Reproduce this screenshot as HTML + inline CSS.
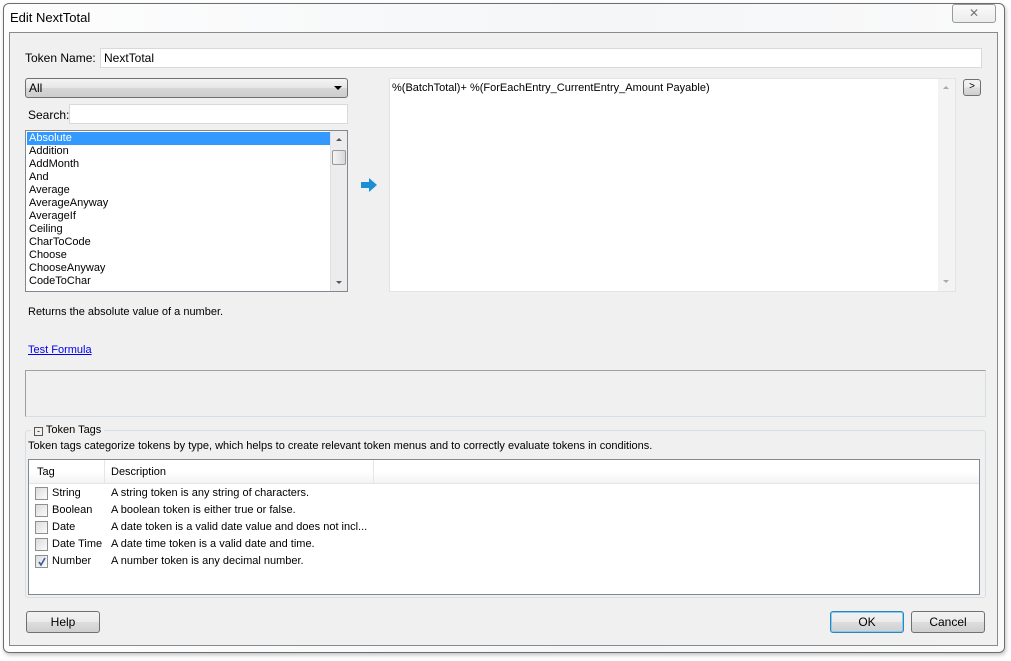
<!DOCTYPE html>
<html><head><style>
*{box-sizing:border-box}
body{margin:0;width:1011px;height:661px;background:#fff;font:12px "Liberation Sans",sans-serif;color:#000;position:relative;overflow:hidden}
.a{position:absolute}
.win{left:3px;top:3px;width:1002px;height:650px;border:1px solid #6d6d6d;border-radius:6px;background:linear-gradient(90deg,#fdfdfd,#f4f6f8 60%,#fafafa);box-shadow:1px 2px 4px rgba(0,0,0,.25)}
.inner{left:9px;top:32px;width:989px;height:614px;background:#f0f0f0;border:1px solid #8a8a8a}
.inp{background:#fff;border:1px solid #d6d9de}
.btn{border:1px solid #707070;border-radius:3px;background:linear-gradient(#f2f2f2,#ebebeb 50%,#dddddd 51%,#cfcfcf);text-align:center;line-height:18px}
.li{position:absolute;left:3px;height:13px;line-height:13px;white-space:nowrap;font-size:11px}
.cb{position:absolute;left:6px;width:13px;height:13px;border:1px solid #8e8f8f;background:linear-gradient(135deg,#dcdcdc,#fbfbfb)}
.row{position:absolute;height:17px;line-height:17px;white-space:nowrap}
</style></head><body>
<div class="a win"></div>
<div class="a" style="left:10px;top:10px;font-size:13px">Edit NextTotal</div>
<div class="a" style="left:952px;top:4px;width:44px;height:19px;border:1px solid #9a9a9a;border-radius:3px;background:linear-gradient(#fafafa,#ececec);text-align:center;line-height:17px;color:#777;font-size:12px">✕</div>
<div class="a inner"></div>

<div class="a" style="left:25px;top:51px">Token Name:</div>
<div class="a inp" style="left:100px;top:48px;width:882px;height:20px;padding:2px 3px">NextTotal</div>

<div class="a" style="left:25px;top:78px;width:323px;height:20px;border:1px solid #707070;border-radius:3px;background:linear-gradient(#f4f4f4,#e6e6e6 50%,#d7d7d7 51%,#cdcdcd);padding:2px 3px">All<span class="a" style="right:5px;top:7px;width:0;height:0;border-left:4px solid transparent;border-right:4px solid transparent;border-top:4px solid #000"></span></div>
<div class="a" style="left:28px;top:108px">Search:</div>
<div class="a inp" style="left:69px;top:104px;width:279px;height:20px"></div>

<div class="a" style="left:25px;top:130px;width:323px;height:162px;background:#fff;border:1px solid #828790">
 <div class="a" style="left:1px;top:1px;width:303px;height:13px;background:#3399ff"></div>
 <div class="li" style="top:1px;color:#fff">Absolute</div>
 <div class="li" style="top:14px">Addition</div>
 <div class="li" style="top:27px">AddMonth</div>
 <div class="li" style="top:40px">And</div>
 <div class="li" style="top:53px">Average</div>
 <div class="li" style="top:66px">AverageAnyway</div>
 <div class="li" style="top:79px">AverageIf</div>
 <div class="li" style="top:92px">Ceiling</div>
 <div class="li" style="top:105px">CharToCode</div>
 <div class="li" style="top:118px">Choose</div>
 <div class="li" style="top:131px">ChooseAnyway</div>
 <div class="li" style="top:144px">CodeToChar</div>
 <div class="a" style="left:304px;top:0;width:17px;height:160px;background:#ececec;border-left:1px solid #e0e0e0">
  <div class="a" style="left:5px;top:7px;border-left:3px solid transparent;border-right:3px solid transparent;border-bottom:3px solid #555"></div>
  <div class="a" style="left:1px;top:19px;width:14px;height:15px;border:1px solid #999;border-radius:2px;background:linear-gradient(90deg,#f4f4f4,#d8d8d8)"></div>
  <div class="a" style="left:5px;top:150px;border-left:3px solid transparent;border-right:3px solid transparent;border-top:3px solid #555"></div>
 </div>
</div>

<svg class="a" style="left:361px;top:178px" width="16" height="14" viewBox="0 0 16 14"><path d="M0 4h8V0l8 7-8 7v-4H0z" fill="#1d8ed6"/></svg>

<div class="a" style="left:389px;top:78px;width:567px;height:214px;background:#fff;border:1px solid #e3e3e3">
 <div class="a" style="left:2px;top:3px;white-space:nowrap;font-size:11px">%(BatchTotal)+ %(ForEachEntry_CurrentEntry_Amount Payable)</div>
 <div class="a" style="left:548px;top:0;width:17px;height:212px;background:#f3f3f3">
  <div class="a" style="left:5px;top:7px;border-left:3px solid transparent;border-right:3px solid transparent;border-bottom:3px solid #aaa"></div>
  <div class="a" style="left:5px;top:201px;border-left:3px solid transparent;border-right:3px solid transparent;border-top:3px solid #aaa"></div>
 </div>
</div>
<div class="a btn" style="left:963px;top:79px;width:18px;height:17px;line-height:14px;font-size:10px">&gt;</div>

<div class="a" style="left:28px;top:306px;font-size:11px">Returns the absolute value of a number.</div>
<div class="a" style="left:28px;top:344px;font-size:11px;color:#0000ee;text-decoration:underline">Test Formula</div>

<div class="a" style="left:25px;top:370px;width:961px;height:47px;border:1px solid #d5dfe5;border-top-color:#a0a0a0;border-left-color:#a0a0a0"></div>

<div class="a" style="left:25px;top:430px;width:961px;height:168px;border:1px solid #d5dfe5;border-radius:3px"></div>
<div class="a" style="left:31px;top:423px;background:#f0f0f0;padding:0 3px;font-size:11px;line-height:14px"><span style="display:inline-block;width:9px;height:9px;border:1px solid #555;font-size:9px;line-height:6px;text-align:center;vertical-align:-1px">-</span> Token Tags</div>
<div class="a" style="left:28px;top:440px;font-size:11px">Token tags categorize tokens by type, which helps to create relevant token menus and to correctly evaluate tokens in conditions.</div>

<div class="a" style="left:28px;top:459px;width:952px;height:136px;background:#fff;border:1px solid #828790;font-size:11px">
 <div class="a" style="left:0;top:0;width:950px;height:24px;background:linear-gradient(#fff,#fff 50%,#f3f4f6);border-bottom:1px solid #e5e5e5"></div>
 <div class="a" style="left:75px;top:0;width:1px;height:24px;background:#e5e5e5"></div>
 <div class="a" style="left:344px;top:0;width:1px;height:24px;background:#e5e5e5"></div>
 <div class="row" style="left:8px;top:4px">Tag</div>
 <div class="row" style="left:82px;top:4px">Description</div>
 <div class="cb" style="top:27px"></div><div class="row" style="left:23px;top:25px">String</div><div class="row" style="left:82px;top:25px">A string token is any string of characters.</div>
 <div class="cb" style="top:44px"></div><div class="row" style="left:23px;top:42px">Boolean</div><div class="row" style="left:82px;top:42px">A boolean token is either true or false.</div>
 <div class="cb" style="top:61px"></div><div class="row" style="left:23px;top:59px">Date</div><div class="row" style="left:82px;top:59px">A date token is a valid date value and does not incl...</div>
 <div class="cb" style="top:78px"></div><div class="row" style="left:23px;top:76px">Date Time</div><div class="row" style="left:82px;top:76px">A date time token is a valid date and time.</div>
 <div class="cb" style="top:95px"><svg class="a" style="left:1px;top:1px" width="10" height="10"><path d="M2 5l2 3 4-7" stroke="#3a5a9a" stroke-width="1.6" fill="none"/></svg></div><div class="row" style="left:23px;top:93px">Number</div><div class="row" style="left:82px;top:93px">A number token is any decimal number.</div>
</div>

<div class="a btn" style="left:26px;top:611px;width:74px;height:22px;line-height:20px">Help</div>
<div class="a btn" style="left:830px;top:611px;width:74px;height:22px;line-height:20px;border-color:#3c7fb1;box-shadow:inset 0 0 0 1px #72d3f7">OK</div>
<div class="a btn" style="left:911px;top:611px;width:74px;height:22px;line-height:20px">Cancel</div>
</body></html>
